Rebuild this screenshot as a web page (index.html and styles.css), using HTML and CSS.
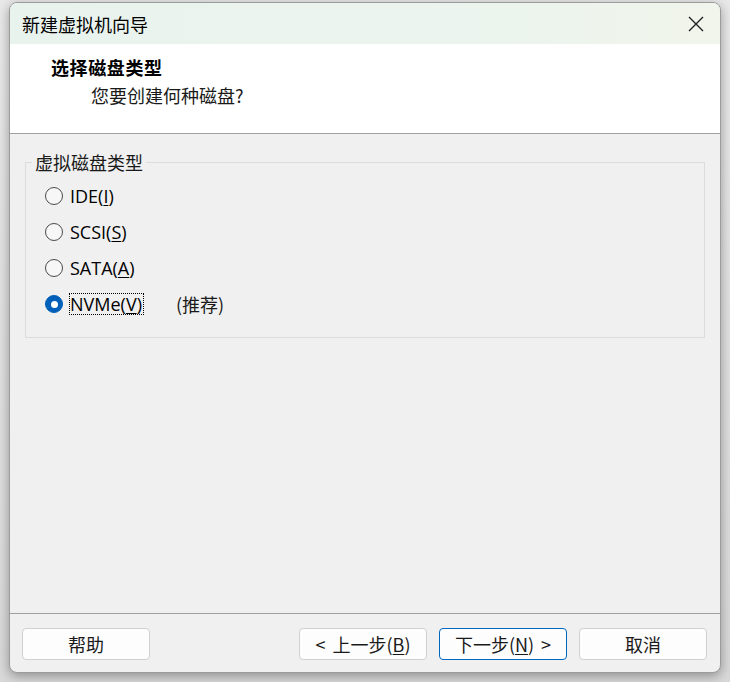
FILE: index.html
```html
<!DOCTYPE html>
<html lang="zh-CN">
<head>
<meta charset="utf-8">
<title>新建虚拟机向导</title>
<link rel="stylesheet" href="styles.css">
</head>
<body>
<div class="window">
  <div class="titlebar">
    <span class="title">新建虚拟机向导</span>
    <span class="close" aria-label="关闭">
      <svg width="16" height="16" viewBox="0 0 16 16"><path d="M1 1 L15 15 M15 1 L1 15" stroke="#1a1a1a" stroke-width="1.3" fill="none"/></svg>
    </span>
  </div>
  <div class="header">
    <div class="h-title">选择磁盘类型</div>
    <div class="h-sub">您要创建何种磁盘?</div>
  </div>
  <div class="content">
    <fieldset class="group">
      <legend class="legend">虚拟磁盘类型</legend>
      <div class="radio-row"><span class="radio"></span><span class="label">IDE(<u>I</u>)</span></div>
      <div class="radio-row"><span class="radio"></span><span class="label">SCSI(<u>S</u>)</span></div>
      <div class="radio-row"><span class="radio"></span><span class="label">SATA(<u>A</u>)</span></div>
      <div class="radio-row"><span class="radio checked"></span><span class="label focused">NVMe(<u>V</u>)</span><span class="note">(推荐)</span></div>
    </fieldset>
  </div>
  <div class="footer">
    <button class="btn">帮助</button>
    <div class="spacer"></div>
    <button class="btn"><span class="arr-l">&lt;</span>上一步(<u>B</u>)</button>
    <button class="btn default">下一步(<u>N</u>)<span class="arr-r">&gt;</span></button>
    <button class="btn">取消</button>
  </div>
</div>
</body>
</html>
```
FILE: styles.css
```css
html, body {
  margin: 0;
  padding: 0;
}
body {
  width: 730px;
  height: 682px;
  overflow: hidden;
  background: linear-gradient(to bottom, #e9e9e9, #d9d9d9);
  font-family: "Noto Sans CJK SC", "Noto Sans", sans-serif;
  color: #1a1a1a;
}
.window {
  margin: 2px 0 0 9px;
  width: 712px;
  height: 671px;
  box-sizing: border-box;
  border: 1px solid #9c9c9c;
  border-radius: 8px;
  overflow: hidden;
  background: #f0f0f0;
  display: flex;
  flex-direction: column;
  box-shadow: 0 3px 12px rgba(0, 0, 0, 0.35);
}
.titlebar {
  height: 41px;
  flex: none;
  display: flex;
  align-items: center;
  justify-content: space-between;
  padding: 0 16px 0 12px;
  background: linear-gradient(90deg, #e9f3ee, #ecf4ee 70%, #f1f5eb);
}
.title {
  font-size: 18px;
  line-height: 20px;
  color: #000;
}
.close {
  display: flex;
  width: 16px;
  height: 16px;
  margin-top: 1px;
}
.header {
  height: 90px;
  flex: none;
  box-sizing: border-box;
  background: #fff;
  border-bottom: 1px solid #a0a0a0;
  padding: 13px 0 0 41px;
}
.h-title {
  font-size: 18px;
  line-height: 20px;
  font-weight: 700;
  letter-spacing: 0.6px;
  color: #000;
}
.h-sub {
  margin: 8px 0 0 40px;
  font-size: 18px;
  line-height: 20px;
  color: #1a1a1a;
}
.content {
  flex: 1;
  padding: 18px 15px 0 15px;
}
.group {
  margin: 0;
  border: 1px solid #dcdcdc;
  padding: 6px 0 15px 6px;
  min-width: 0;
}
.legend {
  padding: 0 3px;
  font-size: 18px;
  line-height: 20px;
  color: #1a1a1a;
}
.radio-row {
  display: flex;
  align-items: center;
  height: 36px;
  margin-left: 13px;
}
.radio {
  width: 18px;
  height: 18px;
  box-sizing: border-box;
  border: 1px solid #4a4a4a;
  border-radius: 50%;
  background: #f7f7f7;
  display: flex;
  align-items: center;
  justify-content: center;
  flex: none;
}
.radio.checked {
  background: #005fb8;
  border-color: #005fb8;
}
.radio.checked::after {
  content: "";
  width: 7px;
  height: 7px;
  border-radius: 50%;
  background: #fff;
}
.label {
  margin-left: 6px;
  padding: 0 1px 0 0;
  border: 1px dotted transparent;
  font-family: "Open Sans", "Noto Sans CJK SC", sans-serif;
  font-size: 18px;
  font-weight: 500;
  line-height: 20px;
  color: #000;
}
.label.focused {
  border-color: #000;
}
.label u, .btn u {
  text-underline-offset: 2px;
}
.note {
  margin-left: 32px;
  font-size: 18px;
  line-height: 20px;
  color: #1a1a1a;
}
.footer {
  height: 59px;
  flex: none;
  box-sizing: border-box;
  border-top: 1px solid #a0a0a0;
  display: flex;
  align-items: flex-start;
  padding: 14px 13px 0 12px;
  gap: 12px;
}
.spacer {
  flex: 1;
}
.btn {
  width: 128px;
  height: 32px;
  box-sizing: border-box;
  border: 1px solid #d0d0d0;
  border-radius: 4px;
  background: #fdfdfd;
  font-family: "Noto Sans CJK SC", "Noto Sans", sans-serif;
  font-size: 18px;
  line-height: 20px;
  color: #1a1a1a;
  padding: 0;
}
.btn.default {
  border-color: #0067c0;
}
.arr-l {
  margin-right: 7px;
}
.arr-r {
  margin-left: 7px;
}
```
